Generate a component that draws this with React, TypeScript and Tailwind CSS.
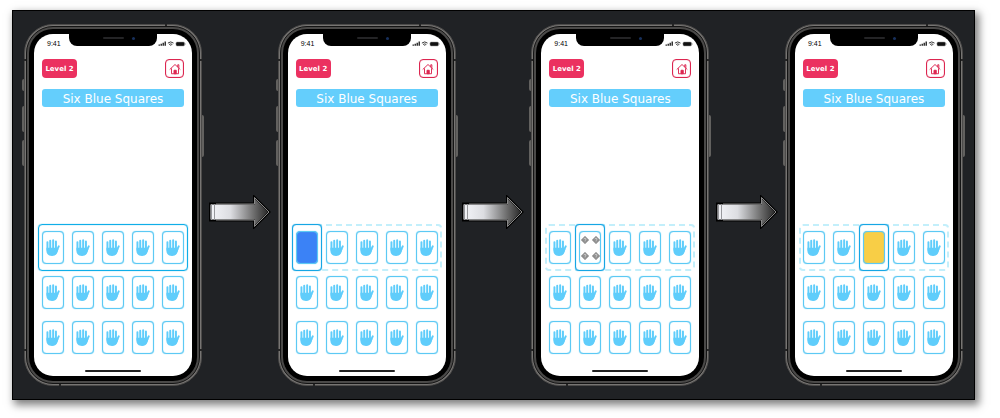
import React from "react";

type CardFace = "hand" | "blue" | "diamonds" | "yellow";

interface Step {
  id: string;
  active: number | null;
  face: CardFace;
}

const steps: Step[] = [
  { id: "row", active: null, face: "hand" },
  { id: "first", active: 0, face: "blue" },
  { id: "second", active: 1, face: "diamonds" },
  { id: "third", active: 2, face: "yellow" },
];

function HandIcon() {
  return (
    <svg viewBox="0 0 42 52" className="h-[17px] w-[14px] shrink-0" aria-hidden="true">
      <g fill="none" stroke="#5fcdfb" strokeLinecap="round" strokeWidth="6">
        <path d="M4 9.500V34M12.500 5V34M21.500 3.500V34M30 7.500V34" />
        <path d="M38.500 22.500 30 41" />
      </g>
      <path
        d="M1 27h32v8l5-5-3 10c-2.500 7.500-8.500 12-17 12C7.500 52 1 46 1 37z"
        fill="#5fcdfb"
      />
    </svg>
  );
}

function DiamondIcon() {
  return (
    <svg viewBox="0 0 16 16" className="size-2" aria-hidden="true">
      <path d="M8 .5 15.500 8 8 15.500.5 8z" fill="#8f8f8f" stroke="#707070" />
      <path
        d="M6 6.400a2 2 0 1 1 2.800 1.900c-.6.3-.8.7-.8 1.300M8 11.300v1"
        fill="none"
        stroke="#fff"
        strokeWidth="1.100"
      />
    </svg>
  );
}

function Card({ face, active }: { face: CardFace; active: boolean }) {
  const fill =
    face === "blue" ? "bg-[#3b82f6]" : face === "yellow" ? "bg-[#f8ce46]" : "bg-white";
  return (
    <div className="relative">
      {active && (
        <span className="absolute -inset-x-1 -inset-y-[7px] rounded-[4px] border border-[#16a6e4] bg-white shadow-[0_0_1px_#16a6e4,inset_0_0_1px_#16a6e4]" />
      )}
      <button
        type="button"
        aria-label={face}
        className={`relative flex h-[33px] w-[22px] items-center justify-center rounded-[4px] border border-[#5cc9f4] shadow-[0_0_1px_#5cc9f4,inset_0_0_1px_#5cc9f4] ${fill}`}
      >
        {face === "hand" && <HandIcon />}
        {face === "diamonds" && (
          <span className="grid grid-cols-2 gap-x-[3px] gap-y-2">
            <DiamondIcon />
            <DiamondIcon />
            <DiamondIcon />
            <DiamondIcon />
          </span>
        )}
      </button>
    </div>
  );
}

function CardRow({ active, face }: { active: number | null; face: CardFace }) {
  return (
    <div className="flex justify-between">
      {[0, 1, 2, 3, 4].map((i) => (
        <Card key={i} face={i === active ? face : "hand"} active={i === active} />
      ))}
    </div>
  );
}

function StatusBar() {
  return (
    <div className="flex h-5 items-start justify-between">
      <span className="w-[35px] pt-1 pl-[13px] font-['Liberation_Sans',sans-serif] text-[7px] leading-3 text-black">
        9:41
      </span>
      <div className="flex h-3 w-[88px] justify-center rounded-b-[8px] bg-black pt-[3px]">
        <span className="h-[2px] w-[21px] rounded-full bg-[#242426]" />
        <span className="-mr-3 ml-2 size-[3px] rounded-full bg-[#17305c]" />
      </div>
      <svg viewBox="0 0 35 16" className="h-4 w-[35px]" aria-hidden="true">
        <path
          d="M1.500 11.800v-1.300H3v1.300zM3.500 11.800V9.700H5v2.100zM5.500 11.800V8.700H7v3.100zM7.500 11.800V7.600H9v4.200z"
          fill="#333"
        />
        <path
          d="M10.900 9.100q2.800-2.400 5.600 0M12.100 10.500q1.600-1.200 3.200 0"
          fill="none"
          stroke="#222"
          strokeWidth=".9"
        />
        <path d="m12.800 11.200.9.900.9-.9z" fill="#222" />
        <rect x="19" y="8" width="8.500" height="4" rx="1.200" fill="#111" stroke="#999" strokeWidth=".5" />
        <path d="M28.300 9.300v1.400" stroke="#888" strokeWidth=".6" />
      </svg>
    </div>
  );
}

function HomeIcon() {
  return (
    <svg
      viewBox="0 0 24 24"
      className="size-3"
      fill="none"
      stroke="#dc2650"
      strokeWidth="1.900"
      aria-hidden="true"
    >
      <path
        d="M2 12.500 12 3l10 9.500M5 11.500V21.500h14V11.500M17.500 7.500V3.500h2.200v6"
        strokeLinejoin="round"
        strokeLinecap="round"
      />
      <path d="M10 21.500v-7h4.500v7z" fill="#dc2650" />
    </svg>
  );
}

function Phone({ step }: { step: Step }) {
  return (
    <section className="relative w-[178px] shrink-0 rounded-[29px] border border-[#4c4b4a] bg-[#777573] p-px">
      <span className="absolute top-[54px] -left-[3px] h-3 w-[2px] rounded-l-sm bg-[#62615f]" />
      <span className="absolute top-[81px] -left-[3px] h-[26px] w-[2px] rounded-l-sm bg-[#62615f]" />
      <span className="absolute top-[115px] -left-[3px] h-[26px] w-[2px] rounded-l-sm bg-[#62615f]" />
      <span className="absolute top-[90px] -right-[3px] h-[42px] w-[2px] rounded-r-sm bg-[#62615f]" />
      <span className="absolute top-[34px] -left-px h-[2px] w-[2px] bg-[#242424]" />
      <span className="absolute top-[34px] -right-px h-[2px] w-[2px] bg-[#242424]" />
      <span className="absolute bottom-[34px] -left-px h-[2px] w-[2px] bg-[#242424]" />
      <span className="absolute -right-px bottom-[34px] h-[2px] w-[2px] bg-[#242424]" />
      <span className="absolute -top-px right-[34px] h-[2px] w-[2px] bg-[#242424]" />
      <span className="absolute -bottom-px left-[34px] h-[2px] w-[2px] bg-[#242424]" />
      <div className="rounded-[27px] border border-[#141414] bg-[#4a4948] p-[2px]">
        <div className="rounded-[24px] bg-black p-[5px]">
          <div className="flex h-[342px] flex-col overflow-hidden rounded-[19px] bg-white">
            <StatusBar />
            <div className="mt-[5px] flex justify-between px-2">
              <button
                type="button"
                className="h-[19px] w-[35px] rounded-[4px] bg-[#eb3160] text-center text-[7px] leading-5 font-bold text-white"
              >
                Level 2
              </button>
              <button
                type="button"
                aria-label="Home"
                className="flex size-[19px] items-center justify-center rounded-[4px] border border-[#dc2650] bg-white shadow-[inset_0_0_1px_#dc2650]"
              >
                <HomeIcon />
              </button>
            </div>
            <h2 className="mx-2 mt-[11px] h-[18px] rounded-[3px] bg-[#64cefc] text-center text-[12px] leading-5 text-white">
              Six Blue Squares
            </h2>
            <div className="mx-1 mt-auto">
              <div
                className={
                  step.active === null
                    ? "rounded-[4px] border border-[#10aee8] px-[3px] py-[6px] shadow-[0_0_1px_#10aee8,inset_0_0_1px_#10aee8]"
                    : "rounded-[4px] border-2 border-dashed border-[#c3effb] px-[2px] py-[5px]"
                }
              >
                <CardRow active={step.active} face={step.face} />
              </div>
              <div className="mt-[5px] flex flex-col gap-3 px-1">
                <CardRow active={null} face="hand" />
                <CardRow active={null} face="hand" />
              </div>
            </div>
            <span className="mx-auto mt-4 mb-1 h-[2px] w-14 shrink-0 rounded-full bg-[#222]" />
          </div>
        </div>
      </div>
    </section>
  );
}

function Arrow({ id }: { id: string }) {
  return (
    <svg viewBox="0 0 62 34" className="mt-[14px] h-[34px] w-[62px] shrink-0" aria-hidden="true">
      <defs>
        <linearGradient id={id}>
          <stop offset="0" stopColor="#f5f6fa" />
          <stop offset=".35" stopColor="#dcdde1" />
          <stop offset=".75" stopColor="#6a6a6a" />
          <stop offset="1" stopColor="#222" />
        </linearGradient>
      </defs>
      <path
        d="M.5 8.500H45V1.500L60.500 17 45 32.500V25.500H.5z"
        fill={`url(#${id})`}
        stroke="#000"
        strokeWidth="2"
      />
      <path d="M7 9H45.500V2.500L60 17 45.500 31.500V25H7" fill="none" stroke="#aaa" strokeWidth=".8" />
      <path d="M2.500 9v16M5.500 9v16" stroke="#97989c" strokeWidth="1" />
    </svg>
  );
}

export default function App() {
  return (
    <div className="bg-white pt-[10px] pr-[25px] pb-[18px] pl-3 font-['DejaVu_Sans',sans-serif]">
      <main className="flex items-center justify-between border border-black bg-[#202225] px-[11px] pt-[13px] pb-[13px] shadow-[3px_4px_8px_1px_rgba(0,0,0,0.5)]">
        {steps.map((step, i) => (
          <React.Fragment key={step.id}>
            {i > 0 && <Arrow id={`arrow-${step.id}`} />}
            <Phone step={step} />
          </React.Fragment>
        ))}
      </main>
    </div>
  );
}
